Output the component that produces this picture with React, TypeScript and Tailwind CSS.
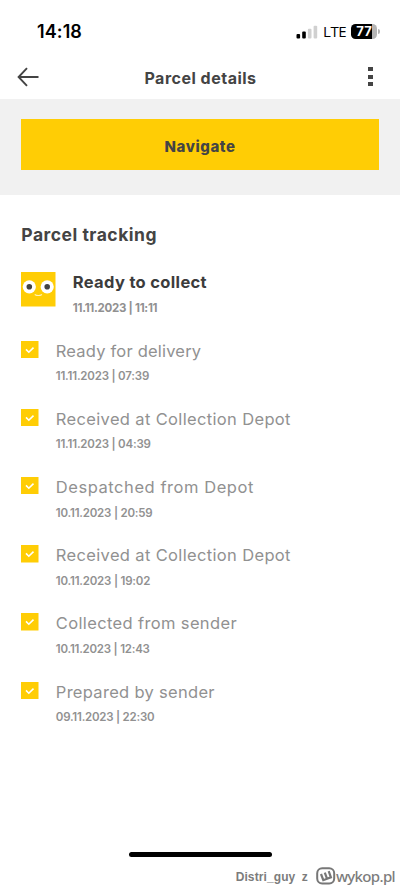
interface TrackingEvent {
  title: string;
  date: string;
  titleTracking: string;
  dateTracking: string;
}

const events: TrackingEvent[] = [
  { title: "Ready for delivery", date: "11.11.2023 | 07:39", titleTracking: "tracking-[0.2px]", dateTracking: "tracking-[-0.2px]" },
  { title: "Received at Collection Depot", date: "11.11.2023 | 04:39", titleTracking: "tracking-[0.35px]", dateTracking: "tracking-[-0.2px]" },
  { title: "Despatched from Depot", date: "10.11.2023 | 20:59", titleTracking: "tracking-[0.55px]", dateTracking: "tracking-[-0.2px]" },
  { title: "Received at Collection Depot", date: "10.11.2023 | 19:02", titleTracking: "tracking-[0.35px]", dateTracking: "tracking-[-0.2px]" },
  { title: "Collected from sender", date: "10.11.2023 | 12:43", titleTracking: "tracking-[0.36px]", dateTracking: "tracking-[-0.23px]" },
  { title: "Prepared by sender", date: "09.11.2023 | 22:30", titleTracking: "tracking-[0.3px]", dateTracking: "tracking-[-0.23px]" },
];

function StatusBar() {
  return (
    <div className="flex h-[54px] shrink-0 items-center justify-between pt-[9px] pr-5 pl-[37px] text-black">
      <span className="text-[18px] leading-6 font-semibold tracking-[0.1px]">14:18</span>
      <div className="flex items-center">
        <svg width="22" height="14" viewBox="0 0 22 14" className="mr-px">
          <rect x="0.5" y="9" width="3.6" height="4.6" rx="1" fill="#000" />
          <rect x="6.2" y="6.6" width="3.6" height="7" rx="1" fill="#000" />
          <rect x="11.9" y="3.8" width="3.6" height="9.8" rx="1" fill="#d0d0d0" />
          <rect x="17.6" y="0.8" width="3.6" height="12.8" rx="1" fill="#d0d0d0" />
        </svg>
        <span className="ml-[4px] -mt-px font-['Open_Sans',sans-serif] text-[15px] leading-5 font-medium tracking-[-0.5px]">LTE</span>
        <div className="ml-[5px] flex items-center">
          <div className="flex h-[15px] w-[26px] items-center justify-center rounded-[4.5px] bg-[linear-gradient(to_right,#000_80%,#b5b5b5_80%)] text-[13px] leading-none font-bold text-white">
            77
          </div>
          <div className="ml-px h-[5px] w-[2px] rounded-r-full bg-[#b5b5b5]" />
        </div>
      </div>
    </div>
  );
}

function Header() {
  return (
    <header className="flex h-[45px] shrink-0 items-center justify-between pr-[27px] pl-[17px]">
      <svg width="22" height="20" viewBox="0 0 22 20" fill="none" stroke="#444" strokeWidth="1.9">
        <path d="M10 1.2 1.6 10 10 18.8M1.6 10H21.5" />
      </svg>
      <h1 className="mr-[6px] pt-0.5 text-[16px] leading-5 font-bold tracking-[0.5px] text-[#444]">Parcel details</h1>
      <div className="flex w-[5px] flex-col gap-[3.5px]">
        <span className="h-1 w-[5px] bg-[#444]" />
        <span className="h-1 w-[5px] bg-[#444]" />
        <span className="h-1 w-[5px] bg-[#444]" />
      </div>
    </header>
  );
}

function Face() {
  return (
    <svg width="34.5" height="34.5" viewBox="0 0 34.5 34.5" className="shrink-0">
      <rect width="34.5" height="34.5" fill="#ffcd05" />
      <circle cx="8.3" cy="14.8" r="6.6" fill="#fff" />
      <circle cx="26.2" cy="14.8" r="6.6" fill="#fff" />
      <circle cx="8.3" cy="14.8" r="2.8" fill="#444" />
      <circle cx="26.2" cy="14.8" r="2.8" fill="#444" />
      <path d="M13.7 22.4Q17.3 24.6 21 22.4" fill="none" stroke="#fff3b8" strokeWidth="1.2" />
    </svg>
  );
}

function Check() {
  return (
    <svg width="17.5" height="17.5" viewBox="0 0 17.5 17.5" className="shrink-0">
      <rect width="17.5" height="17.5" fill="#ffcd05" />
      <path d="M5 8.4 7.8 11.2 12.5 6.6" fill="none" stroke="#fff" strokeWidth="1.6" />
    </svg>
  );
}

function Watermark() {
  return (
    <div className="flex items-center justify-end pr-[5px] text-[#7c7c7c]">
      <span className="pt-px font-['Liberation_Sans',sans-serif] text-[12px] leading-4 font-bold tracking-[0.1px] [word-spacing:3px]">Distri_guy z</span>
      <svg width="20" height="18" viewBox="0 0 20 18" fill="none" stroke="#777" className="ml-2">
        <rect x="1.2" y="1.2" width="17" height="15.4" rx="5" strokeWidth="2" />
        <path d="M5 7 7.3 13.2 14.9 10.4 12.7 4.2M8.8 5.6 11 11.6" strokeWidth="2.2" />
      </svg>
      <span className="font-['Noto_Sans',sans-serif] text-[15px] leading-4 font-medium tracking-[-0.65px]">wykop.pl</span>
    </div>
  );
}

function App() {
  return (
    <div className="flex h-[886px] w-full flex-col overflow-hidden bg-white font-['Inter',sans-serif]">
      <StatusBar />
      <Header />

      {/* Navigate */}
      <div className="h-24 shrink-0 bg-[#f1f1f1] px-[21.3px] pt-5">
        <button className="h-[51px] w-full bg-[#ffcd05] pt-[5px] text-[15px] font-extrabold tracking-[0.55px] text-[#444]">
          Navigate
        </button>
      </div>

      {/* Tracking history */}
      <main className="flex-1 px-[21.3px] pt-[28px]">
        <h2 className="text-[17.5px] leading-6 font-bold tracking-[0.5px] text-[#444]">Parcel tracking</h2>

        <div className="mt-[25.4px] flex h-[68.2px] gap-[17px]">
          <Face />
          <div>
            <p className="text-[16.5px] leading-[21px] font-bold tracking-[0.33px] text-[#3c3c3c]">Ready to collect</p>
            <p className="mt-[6.6px] text-[11.5px] leading-4 font-bold tracking-[-0.28px] text-[#919191]">11.11.2023 | 11:11</p>
          </div>
        </div>

        {events.map((event) => (
          <div key={event.date} className="flex h-[68.2px] gap-[17px]">
            <Check />
            <div>
              <p className={`text-[16.5px] leading-[20px] text-[#919191] ${event.titleTracking}`}>{event.title}</p>
              <p className={`mt-[7.6px] text-[11.5px] leading-4 font-semibold text-[#919191] ${event.dateTracking}`}>
                {event.date}
              </p>
            </div>
          </div>
        ))}
      </main>

      <footer className="shrink-0">
        <div className="mx-auto h-[5px] w-[143px] rounded-full bg-black" />
        <div className="mt-[10px] pb-px">
          <Watermark />
        </div>
      </footer>
    </div>
  );
}

export default App;
